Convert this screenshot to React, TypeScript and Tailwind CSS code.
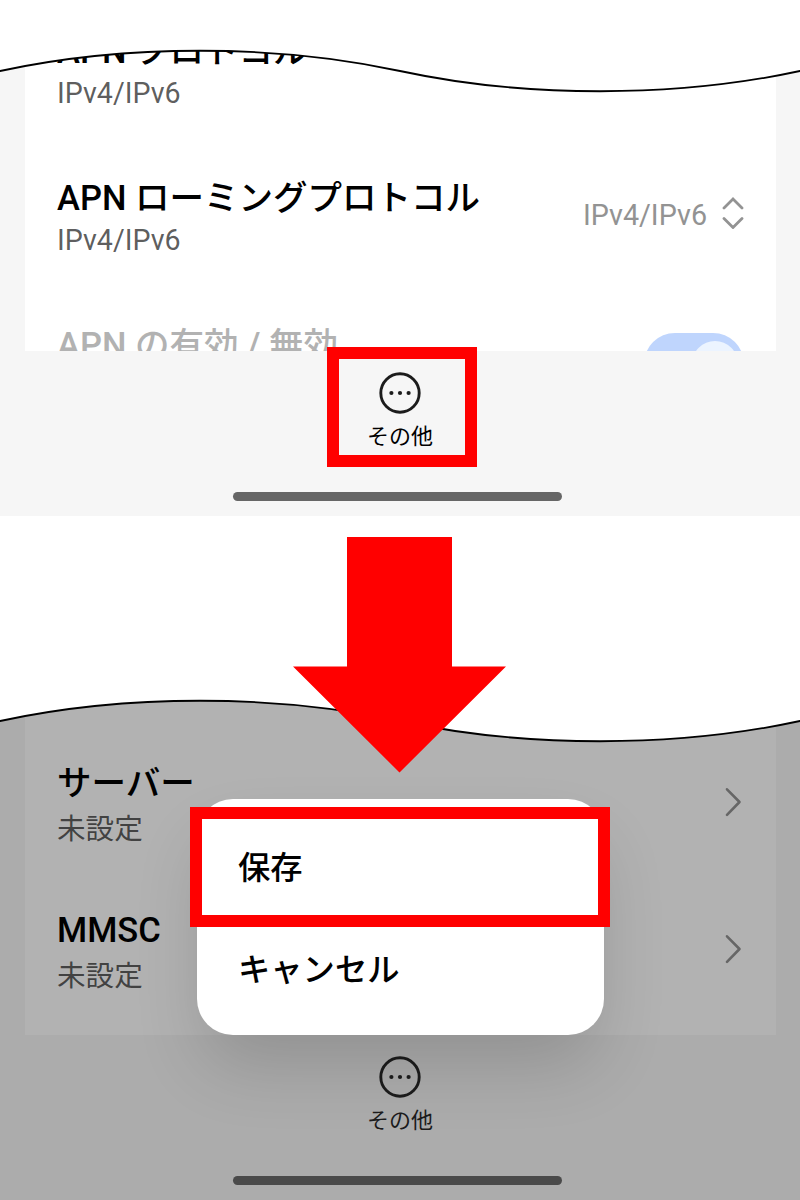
import type { ReactNode } from 'react';
import clsx from 'clsx';

interface SettingRowProps {
  title: string;
  value?: string;
  disabled?: boolean;
  children?: ReactNode;
}

function SettingRow({ title, value, disabled, children }: SettingRowProps) {
  return (
    <div className="flex h-[147px] shrink-0 justify-between pr-8 pl-8">
      <div className="whitespace-nowrap">
        <p
          className={clsx(
            'text-[34.5px] leading-[42px] font-medium',
            disabled ? 'text-[#b2b2b2]' : 'text-black'
          )}
        >
          {title}
        </p>
        {value && (
          <p
            className={clsx(
              'text-[28.6px] text-black/65',
              value === '未設定' ? 'leading-[50px]' : 'leading-[42px]'
            )}
          >
            {value}
          </p>
        )}
      </div>
      {children}
    </div>
  );
}

function ChevronRight() {
  return (
    <svg className="mt-[24px] mr-px h-8 w-5" viewBox="0 0 20 32" fill="none">
      <path d="M4 3.3L16.5 16L4 28.9" stroke="#666" strokeWidth="2.6" strokeLinecap="round" strokeLinejoin="round" />
    </svg>
  );
}

function UpDown() {
  return (
    <svg className="h-8 w-6" viewBox="0 0 24 32" fill="none" stroke="#939393" strokeWidth="2.8">
      <path d="M3 11L12 2L21 11M3 21.5L12 30.5L21 21.5" strokeLinecap="round" strokeLinejoin="miter" />
    </svg>
  );
}

// 画面上部の波形の切り抜き
function WaveCut() {
  return (
    <svg className="absolute top-0 left-0 h-[100px] w-[800px]" viewBox="0 0 800 100">
      <path d="M0 71C125 44 275 44 400 71S675 98 800 71V0H0Z" fill="#fff" />
      <path d="M-4 71.9L0 71C125 44 275 44 400 71S675 98 800 71L804 70.1" fill="none" stroke="#000" strokeWidth="1.8" />
    </svg>
  );
}

function BottomBar({ dimmed }: { dimmed?: boolean }) {
  return (
    <div className="flex h-[165px] shrink-0 flex-col items-center pt-[21px] pr-px">
      <svg className="h-[42px] w-[42px]" viewBox="0 0 42 42">
        <circle cx="21" cy="21" r="19.2" fill="none" stroke="#1c1c1c" strokeWidth="2.9" />
        <circle cx="12.4" cy="21" r="2.1" fill="#1c1c1c" />
        <circle cx="21" cy="21" r="2.1" fill="#1c1c1c" />
        <circle cx="29.6" cy="21" r="2.1" fill="#1c1c1c" />
      </svg>
      <span className={clsx('mt-[7px] ml-px text-[22px] leading-8', dimmed ? 'text-[#1c1c1c]' : 'text-black')}>その他</span>
      <div className={clsx('mt-[39px] mr-1 h-[9px] w-[329px] rounded-full', dimmed ? 'bg-[#4a4a4a]' : 'bg-[#666]')} />
    </div>
  );
}

export default function App() {
  return (
    <div
      lang="ja"
      className="relative flex h-[1200px] w-[800px] flex-col overflow-hidden bg-white font-['Roboto','Noto_Sans_CJK_JP',sans-serif]"
    >
      <section className="relative flex h-[516px] shrink-0 flex-col bg-[#f6f6f6]">
        <div className="mr-6 ml-[25px] flex h-[351px] shrink-0 flex-col overflow-hidden bg-white pt-[30px]">
          <SettingRow title="APN プロトコル" value="IPv4/IPv6" />
          <SettingRow title="APN ローミングプロトコル" value="IPv4/IPv6">
            <div className="mt-[20px] -mr-px flex h-8 items-center gap-[14px]">
              <span className="pt-[5px] text-[28.7px] text-[#939393]">IPv4/IPv6</span>
              <UpDown />
            </div>
          </SettingRow>
          <SettingRow title="APN の有効 / 無効" disabled>
            <div className="mt-[8.5px] flex h-[62px] w-[100px] items-center justify-end rounded-full bg-[#bfd5fd] py-2 pr-1.5">
              <div className="h-[46px] w-[46px] rounded-full bg-[#ecf4ff]" />
            </div>
          </SettingRow>
        </div>
        <BottomBar />
        <WaveCut />
        <div className="absolute top-[347px] left-[327px] h-[120px] w-[150px] border-12 border-[#ff0000]" />
      </section>

      <section className="relative flex h-[684px] shrink-0 flex-col">
        <div className="h-[134px] shrink-0 bg-white" />
        <div className="relative flex h-[550px] shrink-0 flex-col overflow-hidden bg-[#acacac]">
          <div className="mr-6 ml-[25px] flex h-[385px] shrink-0 flex-col overflow-hidden bg-[#b2b2b2] pt-[112px]">
            <SettingRow title="サーバー" value="未設定">
              <ChevronRight />
            </SettingRow>
            <SettingRow title="MMSC" value="未設定">
              <ChevronRight />
            </SettingRow>
          </div>
          <BottomBar dimmed />
          <div className="absolute top-[148.5px] left-[197px] flex h-[236px] w-[407px] flex-col rounded-[36px] bg-white px-[41px] pt-[18.5px] text-[32.3px] leading-[102px] font-medium text-black shadow-[0_36px_70px_-8px_rgba(0,0,0,0.16)]">
            <button className="h-[102px] text-left">保存</button>
            <button className="h-[102px] text-left">キャンセル</button>
          </div>
          <WaveCut />
          <div className="absolute top-[157px] left-[190px] h-[120px] w-[420px] border-12 border-[#ff0000]" />
        </div>
        <svg className="absolute top-[21px] left-[293px] h-[236px] w-[213px]" viewBox="0 0 213 236">
          <path d="M54 0H159V129.5H213L106.5 235.5L0 129.5H54Z" fill="#ff0000" />
        </svg>
      </section>
    </div>
  );
}
